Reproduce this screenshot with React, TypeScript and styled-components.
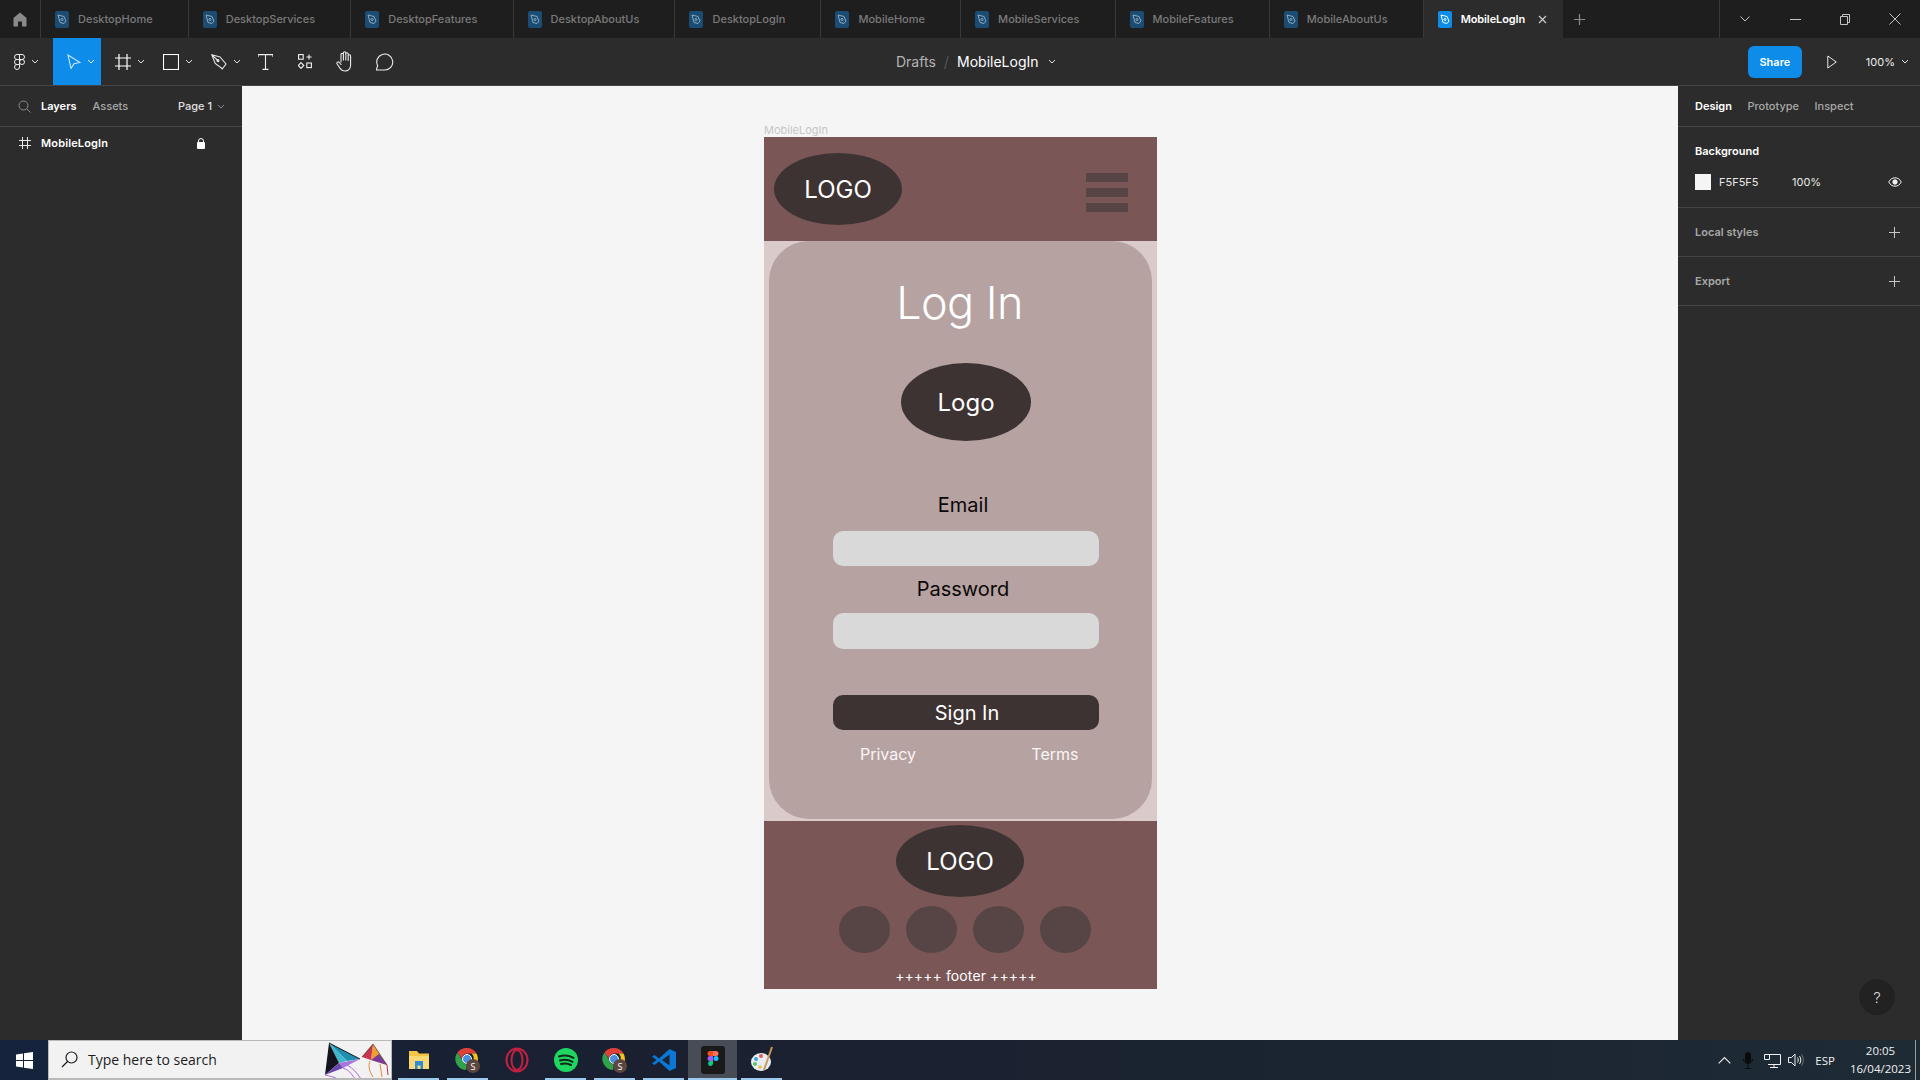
import React from "react";
import styled, { createGlobalStyle } from "styled-components";

const Global = createGlobalStyle`
  html, body { margin: 0; padding: 0; width: 1920px; height: 1080px; overflow: hidden; background: #1e1e1e; }
  * { box-sizing: border-box; }
  body { font-family: Inter, "Liberation Sans", sans-serif; }
`;

const Page = styled.div`
  width: 1920px; height: 1080px;
  display: grid;
  grid-template-rows: 38px 48px 954px 40px;
  font-family: Inter, "Liberation Sans", sans-serif;
`;

/* ---------- tab bar ---------- */
const TabBar = styled.div`
  display: flex; background: #1e1e1e; align-items: stretch;
`;
const HomeTab = styled.div`
  width: 41px; display: flex; align-items: center; justify-content: center;
  border-right: 1px solid #383838; color: #8a8a8a;
`;
const Tab = styled.div<{ $active?: boolean }>`
  display: flex; align-items: center; gap: 9px;
  padding: 0 ${p => (p.$active ? "15px" : "35.1px")} 0 14px;
  border-right: 1px solid ${p => (p.$active ? "transparent" : "#383838")};
  background: ${p => (p.$active ? "#2c2c2c" : "transparent")};
  color: ${p => (p.$active ? "#ffffff" : "#7a7a7a")};
  font-size: 11px; font-weight: ${p => (p.$active ? 600 : 500)};
  letter-spacing: ${p => (p.$active ? "-0.1px" : "0")};
  white-space: nowrap;
`;
const TabGlyph = styled.span<{ $active?: boolean }>`
  width: 14px; height: 17px; border-radius: 2px; display: flex; align-items: center; justify-content: center;
  background: ${p => (p.$active ? "#0d8ce9" : "#1b4d74")};
  color: ${p => (p.$active ? "#ffffff" : "#8fa9bd")};
`;
const TabClose = styled.span`
  color: #c8c8c8; display: flex; margin-left: 4px;
`;
const AddTab = styled.span`
  margin-left: 11px; color: #8a8a8a; display: flex; align-items: center;
`;
const WindowControls = styled.div`
  margin-left: auto; display: flex; border-left: 1px solid #383838;
`;
const WindowButton = styled.div`
  width: 50px; display: flex; align-items: center; justify-content: center; color: #c4c4c4;
`;

/* ---------- toolbar ---------- */
const Toolbar = styled.div`
  display: grid; grid-template-columns: 896px auto 1fr;
  background: #2c2c2c; border-bottom: 1px solid #444444; color: #ffffff;
`;
const ToolGroup = styled.div`
  display: flex; align-items: stretch;
`;
const Tool = styled.div<{ $active?: boolean; $w?: number }>`
  width: ${p => p.$w ?? 48}px; display: flex; align-items: center; gap: 6px; padding-left: 14px;
  background: ${p => (p.$active ? "#0d8ce9" : "transparent")};
`;
const SingleTool = styled.div`
  width: 40px; display: flex; align-items: center; justify-content: center;
`;
const Crumbs = styled.div`
  display: flex; align-items: center; font-size: 14px; white-space: nowrap; color: #ffffff;
`;
const CrumbMuted = styled.span`
  color: #b3b3b3;
`;
const CrumbSlash = styled.span`
  color: #5c5c5c; margin: 0 8px; font-weight: 300; font-size: 15px;
`;
const CrumbChevron = styled.span`
  display: flex; margin-left: 9px;
`;
const ToolRight = styled.div`
  display: flex; align-items: center; justify-content: flex-end; padding-right: 11px;
`;
const ShareButton = styled.div`
  width: 54px; height: 32px; border-radius: 6px; background: #0d8ce9;
  display: flex; align-items: center; justify-content: center;
  font-size: 11px; font-weight: 600; color: #fff;
`;
const PlayIcon = styled.span`
  display: flex; margin-left: 22px;
`;
const ZoomLabel = styled.span`
  display: flex; align-items: center; gap: 6px; margin-left: 26px; font-size: 11px; color: #eeeeee;
`;

/* ---------- workspace ---------- */
const Workspace = styled.div`
  display: grid; grid-template-columns: 242px 1fr 242px; min-height: 0;
`;
const SidePanel = styled.div`
  background: #2c2c2c; color: #fff; font-size: 11px; min-height: 0;
`;
const LeftTabs = styled.div`
  height: 41px; border-bottom: 1px solid #444444; display: flex; align-items: center;
  padding-left: 18px;
`;
const PanelTab = styled.span<{ $on?: boolean }>`
  font-weight: ${p => (p.$on ? 600 : 500)};
  color: ${p => (p.$on ? "#ffffff" : "#a8a8a8")};
`;
const SearchIcon = styled.span`
  display: flex; margin-right: 10px; color: #8c8c8c;
`;
const AssetsTab = styled(PanelTab)`
  margin-left: 16px;
`;
const PageSelect = styled.span`
  margin-left: auto; margin-right: 17px; display: flex; align-items: center; gap: 5px;
  color: #e0e0e0; font-weight: 500;
`;
const LayerRow = styled.div`
  height: 32px; display: flex; align-items: center; padding-left: 19px; font-weight: 600;
`;
const LayerName = styled.span`
  margin-left: 10px; letter-spacing: 0.15px;
`;
const LockIcon = styled.span`
  display: flex; margin-left: 89px;
`;
const RightTabs = styled.div`
  height: 41px; display: flex; align-items: center; gap: 15.5px; padding-left: 17px;
  border-bottom: 1px solid #444444;
`;
const PanelSection = styled.div<{ $h: number }>`
  height: ${p => p.$h}px; padding: 0 17px; border-bottom: 1px solid #444444;
  display: flex; align-items: center; justify-content: space-between;
`;
const BgSection = styled.div`
  height: 81px; padding: 17px 17px 0; border-bottom: 1px solid #444444;
`;
const SectionTitle = styled.div<{ $muted?: boolean }>`
  font-weight: 600; color: ${p => (p.$muted ? "#a8a8a8" : "#ffffff")};
`;
const FillRow = styled.div`
  display: flex; align-items: center; margin-top: 16px; color: #e8e8e8;
`;
const Swatch = styled.span`
  width: 16px; height: 16px; background: #f5f5f5; margin-right: 8px;
`;
const FillHex = styled.span`
  width: 73px;
`;
const EyeIcon = styled.span`
  display: flex; margin-left: auto; margin-right: 1px;
`;
const PlusIcon = styled.span`
  display: flex; color: #c8c8c8; margin-right: 3px;
`;
const HelpArea = styled.div`
  position: absolute; right: 25px; bottom: 65px; width: 36px; height: 36px; border-radius: 50%;
  background: #222222; color: #dddddd; font-size: 15px; font-weight: 300;
  display: flex; align-items: center; justify-content: center;
`;

/* ---------- canvas ---------- */
const Canvas = styled.div`
  background: #f5f5f5; padding: 37px 0 0 522px; overflow: hidden;
`;
const FrameLabel = styled.div`
  font-size: 11px; line-height: 14px; color: #c6c6c6; height: 14px;
`;
const Frame = styled.div`
  width: 393px; height: 852px; display: flex; flex-direction: column;
`;
const Header = styled.div`
  height: 104px; background: #7a5656; display: flex; align-items: flex-start; justify-content: space-between;
  padding: 16px 29px 0 10px;
`;
const Oval = styled.div<{ $w: number; $h: number; $size?: number }>`
  width: ${p => p.$w}px; height: ${p => p.$h}px; border-radius: 50%;
  background: #3e3333; color: #ffffff; font-size: ${p => p.$size ?? 24}px; font-weight: 375;
  display: flex; align-items: center; justify-content: center; flex-shrink: 0;
`;
const Burger = styled.div`
  display: flex; flex-direction: column; gap: 6px; margin-top: 20px;
`;
const BurgerBar = styled.span`
  display: block; width: 42px; height: 9px; background: #574545;
`;
const Main = styled.div`
  height: 580px; background: #dbcaca; padding: 0 5px 2px;
`;
const Card = styled.div`
  height: 578px; background: #b5a2a1; border-radius: 40px;
  padding-top: 35px; display: flex; flex-direction: column;
`;
const Title = styled.h1`
  margin: 0 2px 0 0; font-size: 45px; line-height: 54px; font-weight: 350; color: #ffffff; text-align: center;
  letter-spacing: -0.6px;
`;
const Form = styled.div`
  margin-left: 64px; width: 266px; display: flex; flex-direction: column;
`;
const FormLogo = styled(Oval)`
  margin: 33px 0 0 68px;
`;
const FieldLabel = styled.div<{ $top: number }>`
  margin-top: ${p => p.$top}px; font-size: 20px; line-height: 24px; color: #0a0707; text-align: center;
  padding-right: 6px; font-weight: 380;
`;
const Input = styled.div<{ $top: number; $h: number }>`
  margin-top: ${p => p.$top}px; height: ${p => p.$h}px; border-radius: 10px; background: #d9d9d9;
`;
const SignIn = styled.div`
  margin-top: 46px; height: 35px; border-radius: 10px; background: #3e3333; color: #ffffff;
  font-size: 20px; font-weight: 375; padding-left: 2px; display: flex; align-items: center; justify-content: center;
`;
const LinkRow = styled.div`
  margin-top: 14px; display: flex; justify-content: space-between; padding: 0 20.5px 0 27px;
  font-size: 16px; line-height: 20px; font-weight: 375; color: #fbf5f5;
`;
const Footer = styled.div`
  height: 168px; background: #7a5656; padding-top: 4px; display: flex; flex-direction: column; align-items: center;
`;
const FooterLogo = styled(Oval)`
  margin-right: 1px;
`;
const Socials = styled.div`
  margin: 9px 0 0 8px; display: flex; gap: 16px;
`;
const Social = styled.span`
  width: 51px; height: 47px; border-radius: 50%; background: #574545;
`;
const FooterText = styled.div`
  margin: 14px 0 0 11px; font-size: 14px; line-height: 17px; font-weight: 375; letter-spacing: 0.1px; color: #ffffff; white-space: nowrap;
`;

/* ---------- taskbar ---------- */
const Taskbar = styled.div`
  display: flex; align-items: stretch;
  background: linear-gradient(90deg, #15233c 0%, #1a2030 35%, #1b2431 70%, #1e2b35 100%);
`;
const StartButton = styled.div`
  width: 48px; display: flex; align-items: center; justify-content: center;
`;
const SearchBox = styled.div`
  width: 344px; background: #f2f2f2; border: 1px solid #b9b9b9; border-bottom-width: 2px;
  display: flex; align-items: center; padding-left: 12px; overflow: hidden;
  font-family: "Open Sans", "Liberation Sans", sans-serif; font-size: 14px; color: #1d1d1d;
`;
const SearchText = styled.span`
  margin-left: 10px; white-space: nowrap;
`;
const SearchArt = styled.span`
  display: flex; margin-left: auto; margin-right: 2px;
`;
const TaskIcons = styled.div`
  display: flex; margin-left: 2px;
`;
const TaskIcon = styled.div<{ $open?: boolean; $current?: boolean }>`
  width: 49px; position: relative; display: flex; align-items: center; justify-content: center;
  background: ${p => (p.$current ? "#474c57" : "transparent")};
  &::after {
    content: "";
    display: ${p => (p.$open ? "block" : "none")};
    position: absolute; left: ${p => (p.$current ? 0 : 4)}px; right: ${p => (p.$current ? 0 : 4)}px;
    bottom: 0; height: 2px; background: #9cc9ee;
  }
`;
const Tray = styled.div`
  margin-left: auto; display: flex; align-items: center; color: #f0f0f0;
  font-family: "Open Sans", "Liberation Sans", sans-serif; font-size: 11.5px;
`;
const TrayIcon = styled.span`
  display: flex; width: 24px; justify-content: center;
`;
const TrayLang = styled.span`
  margin: 0 15px 0 7px;
`;
const Clock = styled.div`
  text-align: center; line-height: 18px; margin-right: 4px;
`;
const DesktopEdge = styled.span`
  align-self: stretch; width: 5px; border-left: 1px solid #9a9a9a;
`;

/* ---------- icons ---------- */
const Chevron = ({ c = "currentColor" }: { c?: string }) => (
  <svg width="8" height="5" viewBox="0 0 8 5" fill="none"><path d="M1 1l3 3 3-3" stroke={c} strokeWidth="1" /></svg>
);
const TabPen = () => (
  <svg width="10" height="11" viewBox="0 0 10 11" fill="none" stroke="currentColor" strokeWidth="1">
    <path d="M1 1l6 1.5L9 7 7 9.5 3 8.500z" /><circle cx="5" cy="5.500" r="1" />
  </svg>
);
const FigmaOutline = () => (
  <svg width="11" height="16" viewBox="0 0 11 16" fill="none" stroke="#eeeeee" strokeWidth="1">
    <path d="M5.500.5H3a2.500 2.500 0 0 0 0 5h2.500zM5.500.5H8a2.500 2.500 0 0 1 0 5H5.500zM5.500 5.500H3a2.500 2.500 0 0 0 0 5h2.500zM5.500 10.500H3A2.500 2.500 0 1 0 5.500 13z" />
    <circle cx="8" cy="8" r="2.500" />
  </svg>
);
const Chrome = () => (
  <svg width="26" height="30" viewBox="0 0 26 30">
    <path d="M12 3a11 11 0 0 1 9.500 5.500H12z" fill="#e0403a" /><path d="M2.500 7.500A11 11 0 0 1 12 3v5.500a5 5 0 0 0-4.500 2.800L7 14z" fill="#e0403a" />
    <path d="M21.500 8.500A11 11 0 0 1 12 25l5-8.500a5 5 0 0 0-.5-8z" fill="#f6c21c" /><path d="M2.500 7.500L8 16.500a5 5 0 0 0 4 3l-1 5.500A11 11 0 0 1 2.500 7.500z" fill="#31a24c" />
    <circle cx="12" cy="14" r="4.500" fill="#4a90e2" stroke="#fff" strokeWidth="1" />
    <circle cx="18" cy="21" r="7" fill="#5b4640" /><text x="18" y="24.500" fontSize="9" fill="#fff" textAnchor="middle" fontFamily="Open Sans, sans-serif">S</text>
  </svg>
);
const Kites = () => (
  <svg width="66" height="38" viewBox="0 0 66 38" fill="none">
    <path d="M6 2L37 18 24 20z" fill="#1f8fb0" /><path d="M6 2L24 20 16 22z" fill="#3fb6c9" />
    <path d="M6 2L16 22 2 34z" fill="#14141f" /><path d="M16 22l21-4-17 9z" fill="#a874e0" /><path d="M2 34l14-12 4 5z" fill="#6d48b0" />
    <path d="M6 2L37 18" stroke="#14141f" /><path d="M20 27c6 2 8 5 12 11M2 34c5 1 9 2 13 4M24 24c6 3 10 8 14 14" stroke="#b06ad8" />
    <path d="M50 3L64 24 48 19z" fill="#f0a030" /><path d="M50 3L48 19 39 16z" fill="#c8354f" /><path d="M48 19l16 5-8-11z" fill="#7a3a9a" />
    <path d="M50 3L64 24M50 3L39 16" stroke="#222" strokeWidth=".6" />
    <path d="M47 20c-2 4-1 10 3 16M57 23l2 13" stroke="#e8873a" /><path d="M64 24l1 10" stroke="#c0354f" />
  </svg>
);

export default function App() {
  const tabs = ["DesktopHome", "DesktopServices", "DesktopFeatures", "DesktopAboutUs", "DesktopLogIn", "MobileHome", "MobileServices", "MobileFeatures", "MobileAboutUs"];
  const plus = <svg width="11" height="11" viewBox="0 0 11 11" stroke="currentColor"><path d="M5.500 0v11M0 5.500h11" /></svg>;
  return (
    <Page>
      <Global />
      <TabBar>
        <HomeTab>
          <svg width="14" height="15" viewBox="0 0 14 15" fill="currentColor"><path d="M7 0.5L13.500 6v8.500H9V9.500H5v5H.5V6z" /></svg>
        </HomeTab>
        {tabs.map(t => (
          <Tab key={t}><TabGlyph><TabPen /></TabGlyph>{t}</Tab>
        ))}
        <Tab $active>
          <TabGlyph $active><TabPen /></TabGlyph>MobileLogIn
          <TabClose>
            <svg width="9" height="9" viewBox="0 0 9 9" stroke="currentColor" strokeWidth="1.300"><path d="M1 1l7 7M8 1L1 8" /></svg>
          </TabClose>
        </Tab>
        <AddTab>
          <svg width="11" height="11" viewBox="0 0 11 11" stroke="currentColor" strokeWidth="1.200"><path d="M5.500 0v11M0 5.500h11" /></svg>
        </AddTab>
        <WindowControls>
          <WindowButton><svg width="10" height="6" viewBox="0 0 10 6" fill="none" stroke="currentColor"><path d="M.5.5L5 5 9.500.5" /></svg></WindowButton>
          <WindowButton><svg width="11" height="1" viewBox="0 0 11 1" stroke="currentColor"><path d="M0 .5h11" /></svg></WindowButton>
          <WindowButton><svg width="10" height="11" viewBox="0 0 10 11" fill="none" stroke="currentColor"><path d="M.5 2.500h7v8h-7zM2.500 2.500v-2h7v8h-2" /></svg></WindowButton>
          <WindowButton><svg width="12" height="12" viewBox="0 0 12 12" stroke="currentColor"><path d="M.5.5l11 11M11.500.5l-11 11" /></svg></WindowButton>
        </WindowControls>
      </TabBar>

      <Toolbar>
        <ToolGroup>
          <Tool $w={53}><FigmaOutline /><Chevron c="#e0e0e0" /></Tool>
          <Tool $active>
            <svg width="14" height="15" viewBox="0 0 14 15" fill="none" stroke="#cfe8fb" strokeWidth="1.100"><path d="M1 1l12 7.500-6 1.200L4 14.500z" /></svg>
            <Chevron c="#dff0fc" />
          </Tool>
          <Tool>
            <svg width="16" height="16" viewBox="0 0 16 16" stroke="#ffffff" strokeWidth="1.200"><path d="M4 0v16M12 0v16M0 4h16M0 12h16" /></svg>
            <Chevron c="#e0e0e0" />
          </Tool>
          <Tool>
            <svg width="16" height="16" viewBox="0 0 16 16" fill="none" stroke="#ffffff" strokeWidth="1.100"><rect x=".5" y=".5" width="15" height="15" /></svg>
            <Chevron c="#e0e0e0" />
          </Tool>
          <Tool>
            <svg width="16" height="16" viewBox="0 0 16 16" fill="none" stroke="#e8e8e8" strokeWidth="1.100"><path d="M.8.8l8.200 2.100 6 7.100-3.600 4.800-7.200-5.400zM.8.8l5.600 5.200" /><circle cx="7" cy="6.600" r="1" fill="#e8e8e8" /><path d="M11 15.200l-.6-1" /></svg>
            <Chevron c="#e0e0e0" />
          </Tool>
          <SingleTool>
            <svg width="15" height="16" viewBox="0 0 15 16" fill="none" stroke="#f0f0f0" strokeWidth="1.100"><path d="M0 3V.6h15V3M7.500.6v14.800M4.500 15.400h6" /></svg>
          </SingleTool>
          <SingleTool>
            <svg width="15" height="15" viewBox="0 0 15 15" fill="none" stroke="#f0f0f0" strokeWidth="1.100"><rect x=".6" y=".6" width="4.600" height="4.600" /><path d="M11 .4v5.200M8.400 3h5.200" /><path d="M3 8.600l2.800 2.900L3 14.400.2 11.500z" /><rect x="8.800" y="9" width="4.600" height="4.600" /></svg>
          </SingleTool>
          <SingleTool>
            <svg width="18" height="21" viewBox="0 0 18 21" fill="none" stroke="#ececec" strokeWidth="1.100" strokeLinecap="round" strokeLinejoin="round"><path d="M5 11V3.600a1.200 1.200 0 0 1 2.400 0V9M7.400 9V2a1.200 1.200 0 0 1 2.400 0v7M9.800 9V3a1.200 1.200 0 0 1 2.400 0v6.500M12.200 9.500V5a1.200 1.200 0 0 1 2.400 0v9c0 3.500-2.300 6-5.600 6-2.600 0-3.900-1.100-5.200-3L1 12.800c-.8-1.400 1.300-2.600 2.300-1.300L5 13.500" /></svg>
          </SingleTool>
          <SingleTool>
            <svg width="18" height="18" viewBox="2 0 18 18" fill="none" stroke="#ececec" strokeWidth="1.100"><path d="M2 17.200l1.700-4.400A8 8 0 1 1 10.500 17H2z" /></svg>
          </SingleTool>
        </ToolGroup>
        <Crumbs>
          <CrumbMuted>Drafts</CrumbMuted>
          <CrumbSlash>/</CrumbSlash>
          MobileLogIn
          <CrumbChevron><Chevron c="#e0e0e0" /></CrumbChevron>
        </Crumbs>
        <ToolRight>
          <ShareButton>Share</ShareButton>
          <PlayIcon>
            <svg width="16" height="14" viewBox="0 0 10 14" fill="none" stroke="#e8e8e8" strokeWidth="1"><path d="M.8 1v12l8.500-6z" /></svg>
          </PlayIcon>
          <ZoomLabel>100%<Chevron c="#e0e0e0" /></ZoomLabel>
        </ToolRight>
      </Toolbar>

      <Workspace>
        <SidePanel>
          <LeftTabs>
            <SearchIcon>
              <svg width="13" height="13" viewBox="0 0 13 13" fill="none" stroke="currentColor" strokeWidth="1"><circle cx="5.500" cy="5.500" r="4.500" /><path d="M9 9l3.500 3.500" /></svg>
            </SearchIcon>
            <PanelTab $on>Layers</PanelTab>
            <AssetsTab>Assets</AssetsTab>
            <PageSelect>Page 1<Chevron c="#8c8c8c" /></PageSelect>
          </LeftTabs>
          <LayerRow>
            <svg width="12" height="12" viewBox="0 0 12 12" stroke="#e8e8e8" strokeWidth="1"><path d="M3.500 0v12M8.500 0v12M0 3.500h12M0 8.500h12" /></svg>
            <LayerName>MobileLogIn</LayerName>
            <LockIcon>
              <svg width="8" height="11" viewBox="0 0 8 11" fill="#ffffff"><rect y="4" width="8" height="7" rx="1" /><path d="M1.500 4.500V3a2.500 2.500 0 0 1 5 0v1.500" fill="none" stroke="#fff" /></svg>
            </LockIcon>
          </LayerRow>
        </SidePanel>

        <Canvas>
          <FrameLabel>MobileLogIn</FrameLabel>
          <Frame>
            <Header>
              <Oval $w={128} $h={72}>LOGO</Oval>
              <Burger><BurgerBar /><BurgerBar /><BurgerBar /></Burger>
            </Header>
            <Main>
              <Card>
                <Title>Log In</Title>
                <Form>
                  <FormLogo $w={130} $h={78}>Logo</FormLogo>
                  <FieldLabel $top={52}>Email</FieldLabel>
                  <Input $top={14} $h={35} />
                  <FieldLabel $top={11}>Password</FieldLabel>
                  <Input $top={12} $h={36} />
                  <SignIn>Sign In</SignIn>
                  <LinkRow><span>Privacy</span><span>Terms</span></LinkRow>
                </Form>
              </Card>
            </Main>
            <Footer>
              <FooterLogo $w={128} $h={72}>LOGO</FooterLogo>
              <Socials><Social /><Social /><Social /><Social /></Socials>
              <FooterText>+++++ footer +++++</FooterText>
            </Footer>
          </Frame>
        </Canvas>

        <SidePanel>
          <RightTabs>
            <PanelTab $on>Design</PanelTab>
            <PanelTab>Prototype</PanelTab>
            <PanelTab>Inspect</PanelTab>
          </RightTabs>
          <BgSection>
            <SectionTitle>Background</SectionTitle>
            <FillRow>
              <Swatch />
              <FillHex>F5F5F5</FillHex>
              <span>100%</span>
              <EyeIcon>
                <svg width="14" height="10" viewBox="0 0 14 10" fill="none" stroke="#f0f0f0" strokeWidth="1"><path d="M.7 5C2.300 2 4.500.8 7 .8S11.700 2 13.300 5C11.700 8 9.500 9.200 7 9.200S2.300 8 .7 5z" /><circle cx="7" cy="5" r="2.200" fill="#f0f0f0" /></svg>
              </EyeIcon>
            </FillRow>
          </BgSection>
          <PanelSection $h={49}>
            <SectionTitle $muted>Local styles</SectionTitle>
            <PlusIcon>{plus}</PlusIcon>
          </PanelSection>
          <PanelSection $h={49}>
            <SectionTitle $muted>Export</SectionTitle>
            <PlusIcon>{plus}</PlusIcon>
          </PanelSection>
          <HelpArea>?</HelpArea>
        </SidePanel>
      </Workspace>

      <Taskbar>
        <StartButton>
          <svg width="17" height="17" viewBox="0 0 17 17" fill="#ffffff"><path d="M0 2.400L7 1.400v6.600H0zM8 1.300L17 0v8H8zM0 9h7v6.600l-7-1zM8 9h9v8l-9-1.300z" /></svg>
        </StartButton>
        <SearchBox>
          <svg width="17" height="17" viewBox="0 0 17 17" fill="none" stroke="#1d1d1d" strokeWidth="1.200"><circle cx="10.500" cy="6.500" r="5.500" /><path d="M6.500 10.500L1 16" /></svg>
          <SearchText>Type here to search</SearchText>
          <SearchArt><Kites /></SearchArt>
        </SearchBox>
        <TaskIcons>
          <TaskIcon $open>
            <svg width="24" height="24" viewBox="0 0 24 24"><path d="M2 3h8l2 2.500h10V21H2z" fill="#f4c542" /><path d="M2 8h20v13H2z" fill="#f9d976" /><path d="M8 13h8v8h-2.500v-3.500h-3V21H8z" fill="#2f8bd6" /></svg>
          </TaskIcon>
          <TaskIcon $open><Chrome /></TaskIcon>
          <TaskIcon>
            <svg width="24" height="26" viewBox="0 0 24 26" fill="none" stroke="#c2213f" strokeWidth="2"><ellipse cx="12" cy="13" rx="10.500" ry="11.500" /><ellipse cx="12" cy="13" rx="5.500" ry="10" /></svg>
          </TaskIcon>
          <TaskIcon $open>
            <svg width="24" height="24" viewBox="0 0 24 24" fill="none"><circle cx="12" cy="12" r="12" fill="#1ed760" /><path d="M5 8.500c5-1.500 10-1 14.500 1.300M6 12.500c4.500-1.200 8.500-.8 12.500 1.300M7 16c3.500-1 7-.6 10 1" stroke="#12261a" strokeWidth="2" strokeLinecap="round" /></svg>
          </TaskIcon>
          <TaskIcon $open><Chrome /></TaskIcon>
          <TaskIcon $open>
            <svg width="24" height="24" viewBox="0 0 24 24"><path d="M17.500 1L24 4v16l-6.500 3L7 13.500 2.500 17 0 15.500 4.500 12 0 8.500 2.500 7 7 10.500z" fill="#0a78d4" /><path d="M17.500 6.500v11L10 12z" fill="#1b2431" /></svg>
          </TaskIcon>
          <TaskIcon $open $current>
            <svg width="24" height="28" viewBox="0 0 24 28">
              <rect width="24" height="28" rx="3" fill="#1a1a1a" />
              <path d="M12 5H9a2.500 2.500 0 0 0 0 5h3z" fill="#f24e1e" /><path d="M12 5h3a2.500 2.500 0 0 1 0 5h-3z" fill="#ff7262" />
              <path d="M12 10H9a2.500 2.500 0 0 0 0 5h3z" fill="#a259ff" /><circle cx="15" cy="12.500" r="2.500" fill="#1abcfe" />
              <path d="M12 15H9a2.500 2.500 0 1 0 3 2.500z" fill="#0acf83" />
            </svg>
          </TaskIcon>
          <TaskIcon $open>
            <svg width="24" height="28" viewBox="0 0 24 28">
              <ellipse cx="11" cy="16" rx="10" ry="9" fill="#e8edf2" />
              <circle cx="6" cy="13" r="2" fill="#3aa0e0" /><circle cx="11" cy="10" r="2" fill="#e85a5a" /><circle cx="5" cy="18" r="2" fill="#5bc06a" /><circle cx="10" cy="21" r="1.800" fill="#e8c040" />
              <path d="M22 1L14 24" stroke="#c89a5a" strokeWidth="2" />
            </svg>
          </TaskIcon>
        </TaskIcons>
        <Tray>
          <TrayIcon>
            <svg width="13" height="8" viewBox="0 0 13 8" fill="none" stroke="#f0f0f0" strokeWidth="1.100"><path d="M.7 7.300L6.500 1.500l5.800 5.800" /></svg>
          </TrayIcon>
          <TrayIcon>
            <svg width="10" height="17" viewBox="0 0 10 17" fill="none" stroke="#0a0a0a"><rect x="2.500" y=".5" width="5" height="10" rx="2.500" fill="#0a0a0a" /><path d="M.5 7c0 6 9 6 9 0M5 12.500v4M2 16.500h6" /></svg>
          </TrayIcon>
          <TrayIcon>
            <svg width="17" height="15" viewBox="0 0 17 15" fill="none" stroke="#f0f0f0"><path d="M.5 1.500h5v5h-5zM4 1.500h12.500v10H4M10 11.500v3M6 14.500h8" /></svg>
          </TrayIcon>
          <TrayIcon>
            <svg width="16" height="14" viewBox="0 0 16 14" fill="none" stroke="#f0f0f0"><path d="M.5 4.500h3L7 1v12L3.500 9.500h-3zM9.500 4.500c1 1.500 1 3.500 0 5M11.500 3c1.700 2.500 1.700 5.500 0 8" /><path d="M13.500 1.200c2.400 3.500 2.400 8 0 11.600" stroke="#777" /></svg>
          </TrayIcon>
          <TrayLang>ESP</TrayLang>
          <Clock>20:05<br />16/04/2023</Clock>
          <DesktopEdge />
        </Tray>
      </Taskbar>
    </Page>
  );
}
